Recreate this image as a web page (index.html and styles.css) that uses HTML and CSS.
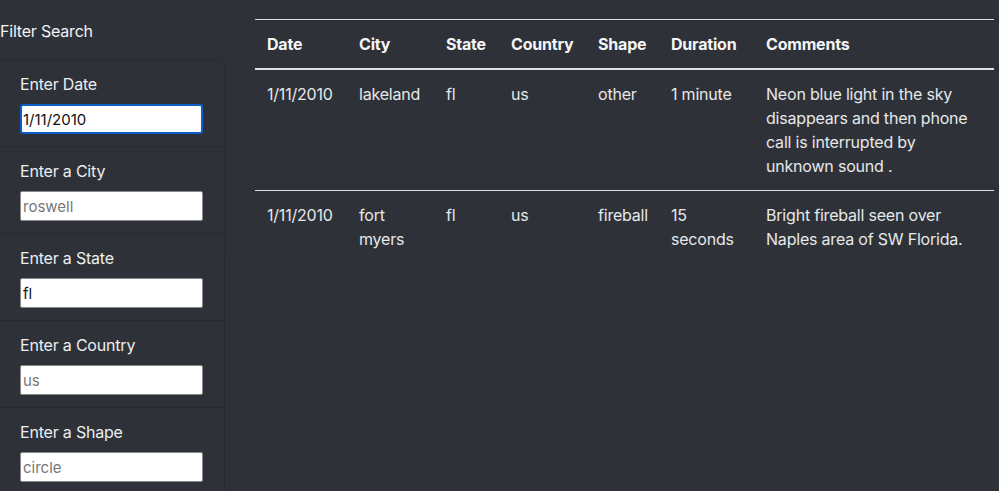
FILE: index.html
```html
<!DOCTYPE html>
<html>
<head>
<meta charset="utf-8">
<link rel="stylesheet" href="styles.css">
</head>
<body>
<div class="page">
  <aside class="sidebar">
    <div class="sidebar-title">Filter Search</div>
    <ul class="filters">
      <li class="filter">
        <label class="filter-label">Enter Date</label>
        <input class="filter-input focused" type="text" value="1/11/2010">
      </li>
      <li class="filter">
        <label class="filter-label">Enter a City</label>
        <input class="filter-input" type="text" placeholder="roswell">
      </li>
      <li class="filter">
        <label class="filter-label">Enter a State</label>
        <input class="filter-input" type="text" value="fl">
      </li>
      <li class="filter">
        <label class="filter-label">Enter a Country</label>
        <input class="filter-input" type="text" placeholder="us">
      </li>
      <li class="filter">
        <label class="filter-label">Enter a Shape</label>
        <input class="filter-input" type="text" placeholder="circle">
      </li>
    </ul>
  </aside>
  <main class="content">
    <table class="ufo-table">
      <colgroup>
        <col class="c-date"><col class="c-city"><col class="c-state"><col class="c-country"><col class="c-shape"><col class="c-duration"><col class="c-comments">
      </colgroup>
      <thead>
        <tr>
          <th>Date</th><th>City</th><th>State</th><th>Country</th><th>Shape</th><th>Duration</th><th>Comments</th>
        </tr>
      </thead>
      <tbody>
        <tr>
          <td>1/11/2010</td><td>lakeland</td><td>fl</td><td>us</td><td>other</td><td>1 minute</td><td>Neon blue light in the sky disappears and then phone call is interrupted by unknown sound .</td>
        </tr>
        <tr>
          <td>1/11/2010</td><td>fort myers</td><td>fl</td><td>us</td><td>fireball</td><td>15 seconds</td><td>Bright fireball seen over Naples area of SW Florida.</td>
        </tr>
      </tbody>
    </table>
  </main>
</div>
</body>
</html>
```
FILE: styles.css
```css
* { box-sizing: border-box; }
html, body {
  margin: 0;
  padding: 0;
  background: #2e3238;
  color: #e9ecef;
  font-family: Inter, Roboto, "Liberation Sans", sans-serif;
  font-size: 16px;
  line-height: 24px;
}
.page {
  display: grid;
  grid-template-columns: 225px 1fr;
  column-gap: 30px;
  height: 491px;
  overflow: hidden;
  padding-right: 5px;
}
.sidebar-title {
  color: #f3f4f5;
  padding-top: 19px;
  height: 60px;
  letter-spacing: -0.2px;
}
.filters {
  list-style: none;
  margin: 0;
  padding: 0;
  border: 1px solid rgba(0,0,0,0.13);
  border-left: none;
  border-radius: 0 5px 0 0;
}
.filter {
  padding: 12px 20px 12px 20px;
  height: 87px;
  border-bottom: 1px solid rgba(0,0,0,0.13);
  display: flex;
  flex-direction: column;
}
.filter:first-child { padding-top: 11px; height: 86px; }
.filter-label {
  color: #eceef0;
  margin-bottom: 8px;
  letter-spacing: -0.2px;
}
.filter-input {
  width: 183px;
  height: 30px;
  border: 1px solid #8a8a8a;
  border-radius: 2px;
  background: #fff;
  color: #111;
  font-family: inherit;
  font-size: 15px;
  padding: 0 2px;
  outline: none;
}
.filter-input::placeholder { color: #777; }
.filter-input.focused {
  border: 2px solid #0b5fc6;
  border-radius: 3px;
  padding: 0 1px;
}
.content { padding-top: 19px; }
.ufo-table {
  width: 739px;
  border-collapse: collapse;
  table-layout: fixed;
  border-top: 1px solid #dcdfe3;
}
.c-date { width: 92px; }
.c-city { width: 87px; }
.c-state { width: 65px; }
.c-country { width: 87px; }
.c-shape { width: 73px; }
.c-duration { width: 95px; }
.c-comments { width: 240px; }
.ufo-table th {
  text-align: left;
  font-weight: 700;
  color: #f4f5f6;
  padding: 12px 12px;
  border-bottom: 2px solid #dcdfe3;
  vertical-align: top;
  letter-spacing: -0.2px;
}
.ufo-table td {
  padding: 12px 12px;
  vertical-align: top;
  color: #e6e8ea;
  letter-spacing: -0.2px;
}
.ufo-table tbody tr:first-child td { border-bottom: 1px solid #dcdfe3; }
```
